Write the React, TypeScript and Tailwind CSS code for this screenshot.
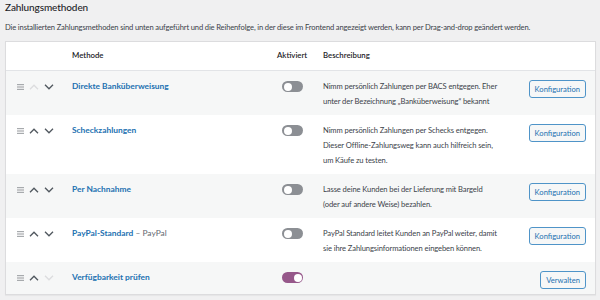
import React from 'react';

interface Gateway {
  name: string;
  sub?: string;
  enabled: boolean;
  description: string;
  action: string;
  canUp: boolean;
  canDown: boolean;
}

const gateways: Gateway[] = [
  {
    name: 'Direkte Banküberweisung',
    enabled: false,
    description: 'Nimm persönlich Zahlungen per BACS entgegen. Eher unter der Bezeichnung „Banküberweisung“ bekannt',
    action: 'Konfiguration',
    canUp: false,
    canDown: true,
  },
  {
    name: 'Scheckzahlungen',
    enabled: false,
    description: 'Nimm persönlich Zahlungen per Schecks entgegen. Dieser Offline-Zahlungsweg kann auch hilfreich sein, um Käufe zu testen.',
    action: 'Konfiguration',
    canUp: true,
    canDown: true,
  },
  {
    name: 'Per Nachnahme',
    enabled: false,
    description: 'Lasse deine Kunden bei der Lieferung mit Bargeld (oder auf andere Weise) bezahlen.',
    action: 'Konfiguration',
    canUp: true,
    canDown: true,
  },
  {
    name: 'PayPal-Standard',
    sub: 'PayPal',
    enabled: false,
    description: 'PayPal Standard leitet Kunden an PayPal weiter, damit sie ihre Zahlungsinformationen eingeben können.',
    action: 'Konfiguration',
    canUp: true,
    canDown: true,
  },
  {
    name: 'Verfügbarkeit prüfen',
    enabled: true,
    description: '',
    action: 'Verwalten',
    canUp: true,
    canDown: false,
  },
];

const Chevron = ({ up, active }: { up: boolean; active: boolean }) => (
  <svg width="10" height="6" viewBox="0 0 10 6" className={active ? 'text-[#50575e]' : 'text-[#dcdcde]'}>
    <path
      d={up ? 'M1 5.2 L5 1.2 L9 5.2' : 'M1 0.8 L5 4.8 L9 0.8'}
      fill="none"
      stroke="currentColor"
      strokeWidth="1.3"
    />
  </svg>
);

const Toggle = ({ on }: { on: boolean }) => (
  <div
    className={`flex h-[11px] w-[21px] items-center rounded-full px-[1.5px] ${
      on ? 'justify-end bg-[#96588a]' : 'justify-start bg-[#8c8f94]'
    }`}
  >
    <div className="h-[8px] w-[8px] rounded-full bg-white" />
  </div>
);

export default function App() {
  return (
    <div
      className="h-[300px] w-[600px] overflow-hidden bg-[#f0f0f1] px-[5px] text-[#3c434a]"
      style={{ fontFamily: 'Lato, "Noto Sans", sans-serif' }}
    >
      <h2 className="pt-[1px] text-[10px] leading-[13px] font-medium tracking-[-0.1px] text-[#1d2327]">
        Zahlungsmethoden
      </h2>
      <p className="mt-[7px] text-[7.6px] leading-[12px] tracking-[-0.15px] whitespace-nowrap">
        Die installierten Zahlungsmethoden sind unten aufgeführt und die Reihenfolge, in der diese im Frontend angezeigt werden, kann per Drag-and-drop geändert werden.
      </p>

      <div className="mt-[8px] w-[591px] border border-[#dcdcde] bg-white shadow-[0_1px_1px_rgba(0,0,0,0.04)]">
        {/* Kopfzeile */}
        <div className="flex h-[29px] items-center border-b border-[#e2e4e7] text-[7.8px] font-semibold text-[#1d2327]">
          <div className="w-[60px]" />
          <div className="w-[206px] pl-[6px]">Methode</div>
          <div className="w-[51px] pl-[5px]">Aktiviert</div>
          <div>Beschreibung</div>
        </div>

        {gateways.map((g, i) => (
          <div
            key={g.name}
            className={`flex items-start pt-[8px] ${i === gateways.length - 1 ? 'pb-[5px]' : 'pb-[6px]'} ${
              i % 2 === 0 ? 'bg-[#f6f7f7]' : 'bg-white'
            }`}
          >
            <div className="flex h-[15px] w-[60px] items-center gap-[5px] pl-[11px]">
              <svg width="7" height="6" viewBox="0 0 7 6" className="text-[#a7aaad]">
                <rect x="0" y="0" width="7" height="1.2" fill="currentColor" />
                <rect x="0" y="2.4" width="7" height="1.2" fill="currentColor" />
                <rect x="0" y="4.8" width="7" height="1.2" fill="currentColor" />
              </svg>
              <Chevron up active={g.canUp} />
              <Chevron up={false} active={g.canDown} />
            </div>
            <div className="w-[206px] pl-[6px] text-[8.4px] leading-[15px]">
              <span className="font-bold text-[#2271b1]">{g.name}</span>
              {g.sub && <span className="text-[#646970]"> – {g.sub}</span>}
            </div>
            <div className="flex h-[15px] w-[51px] items-center pl-[10px]">
              <Toggle on={g.enabled} />
            </div>
            <div className="w-[176px] text-[7.6px] leading-[15px] tracking-[-0.1px]">{g.description}</div>
            <div className="flex flex-1 justify-end pr-[9px]">
              <button className="mt-[1px] h-[18px] rounded-[3px] border border-[#4f94c8] bg-[#f6f7f7] px-[5px] text-[7.6px] leading-[16px] text-[#2271b1]">
                {g.action}
              </button>
            </div>
          </div>
        ))}
      </div>
    </div>
  );
}
